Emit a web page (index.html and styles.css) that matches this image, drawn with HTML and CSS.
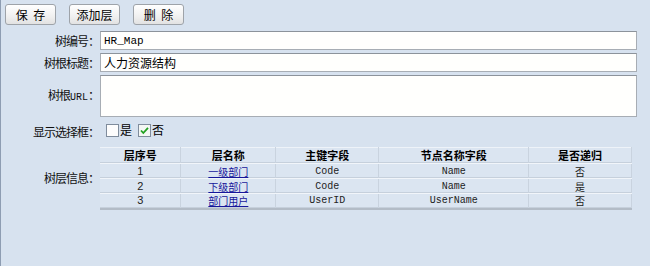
FILE: index.html
```html
<!DOCTYPE html>
<html lang="zh-CN">
<head>
  <meta charset="UTF-8" />
  <title>树结构设置</title>
  <link rel="stylesheet" href="styles.css">
</head>
<body>

  <div class="toolbar">
    <button class="btn">保&nbsp;&nbsp;存</button>
    <button class="btn">添加层</button>
    <button class="btn">删&nbsp;&nbsp;除</button>
  </div>

  <form class="form">
    <label class="label" for="tree_no">树编号：</label>
    <input class="field mono" type="text" id="tree_no" value="HR_Map" />

    <label class="label" for="tree_title">树根标题：</label>
    <input class="field" type="text" id="tree_title" value="人力资源结构" />

    <label class="label" for="tree_url">树根<span class="mono">URL</span>：</label>
    <textarea class="field area" id="tree_url"></textarea>

    <span class="label">显示选择框：</span>
    <div class="checks">
      <label class="check">
        <svg width="13" height="13" viewBox="0 0 13 13">
          <rect x="0.5" y="0.5" width="12" height="12" fill="#fdfdfd" stroke="#7f8c9c"/>
        </svg>
        是
      </label>
      <label class="check">
        <svg width="13" height="13" viewBox="0 0 13 13">
          <rect x="0.5" y="0.5" width="12" height="12" fill="#f4f7f4" stroke="#7f8c9c"/>
          <path d="M3 6.5 L5.3 9 L10 3.8" fill="none" stroke="#21a121" stroke-width="1.8"/>
        </svg>
        否
      </label>
    </div>

    <span class="label">树层信息：</span>
    <table class="levels">
      <thead>
        <tr>
          <th class="c1">层序号</th>
          <th class="c2">层名称</th>
          <th class="c3">主键字段</th>
          <th class="c4">节点名称字段</th>
          <th class="c5">是否递归</th>
        </tr>
      </thead>
      <tbody>
        <tr>
          <td class="num">1</td>
          <td><a href="#">一级部门</a></td>
          <td class="mono">Code</td>
          <td class="mono">Name</td>
          <td>否</td>
        </tr>
        <tr>
          <td class="num">2</td>
          <td><a href="#">下级部门</a></td>
          <td class="mono">Code</td>
          <td class="mono">Name</td>
          <td>是</td>
        </tr>
        <tr>
          <td class="num">3</td>
          <td><a href="#">部门用户</a></td>
          <td class="mono">UserID</td>
          <td class="mono">UserName</td>
          <td>否</td>
        </tr>
      </tbody>
    </table>
  </form>

</body>
</html>
```

FILE: styles.css
```css
* {
  box-sizing: border-box;
  margin: 0;
  padding: 0;
}

html, body {
  height: 100%;
}

body {
  font-family: "Noto Sans CJK SC", "DejaVu Sans", sans-serif;
  font-size: 12px;
  line-height: 16px;
  color: #000;
  background: #d7e2ef;
  border-left: 1px solid #8e9db2;
}

.mono {
  font-family: "Liberation Mono", "Noto Sans CJK SC", monospace;
  font-size: 10px;
}

.toolbar {
  display: flex;
  gap: 13px;
  padding: 4px 0 0 4px;
}

.btn {
  width: 51px;
  height: 21px;
  font-family: inherit;
  font-size: 12px;
  line-height: 19px;
  color: #000;
  background: linear-gradient(#ffffff, #f0f0f0 60%, #e2e2e2);
  border: 1px solid #9ea3a9;
  border-radius: 3px;
}

.form {
  display: grid;
  grid-template-columns: 98px 537px;
  column-gap: 1px;
  row-gap: 3px;
  align-items: center;
  margin-top: 6px;
}

.label {
  text-align: right;
  white-space: nowrap;
  letter-spacing: -1px;
  color: #111;
}

.label .mono {
  letter-spacing: 0;
}

.field {
  height: 19px;
  padding: 0 3px;
  background: #fffffd;
  border: 1px solid #a7adb4;
  border-top-color: #8c939b;
  font-size: 12px;
  outline: none;
  color: #000;
}

.field.mono {
  font-size: 11px;
}

input.field:not(.mono) {
  font-family: inherit;
}

.area {
  height: 42px;
  resize: none;
}

.checks {
  display: flex;
  gap: 6px;
  height: 20px;
  align-items: center;
  padding-left: 6px;
  margin-bottom: 4px;
}

.check {
  display: flex;
  align-items: center;
  gap: 1px;
}

.check svg {
  display: block;
}

.levels {
  width: 532px;
  border-collapse: collapse;
  background: #dbe5f1;
  border-right: 1px solid #a9b3bf;
  border-bottom: 2px solid #b3bcc7;
  text-align: center;
  font-size: 10px;
  line-height: 13px;
}

.levels th,
.levels td {
  border: none;
  border-right: 1px solid #c9d3df;
  border-bottom: 1px solid #f1f5fa;
  box-shadow: inset 0 -1px 0 #c6d0dc;
  padding: 0;
}

.levels th {
  height: 16px;
  font-size: 11px;
  font-weight: bold;
  border-top: 1px solid #eef3f9;
}

.levels td {
  height: 15px;
  color: #222;
}

.levels td.num {
  font-family: "Liberation Sans", sans-serif;
  font-size: 11px;
}

.c1 { width: 81px; }
.c2 { width: 95px; }
.c3 { width: 103px; }
.c4 { width: 150px; }
.c5 { width: 103px; }

.levels a {
  color: #16169a;
  text-decoration: underline;
}
```
